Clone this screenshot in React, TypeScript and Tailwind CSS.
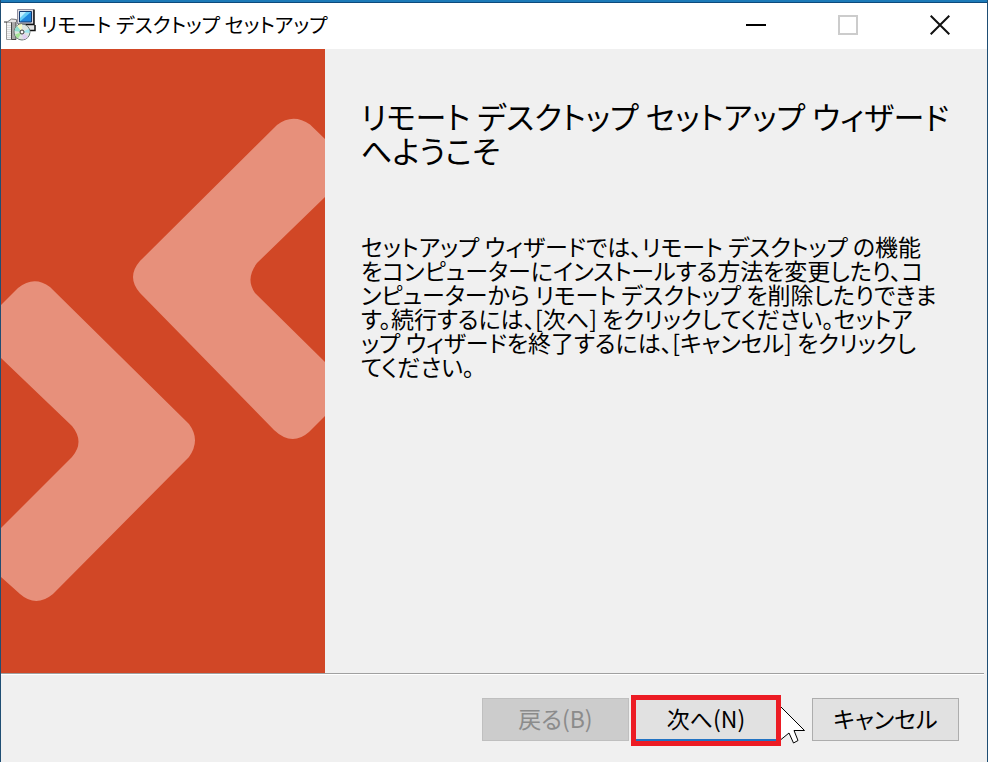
import { Fragment, type ReactNode } from 'react'

const bodyLines = [
  'セットアップ ウィザードでは、リモート デスクトップ の機能',
  'をコンピューターにインストールする方法を変更したり、コ',
  'ンピューターから リモート デスクトップ を削除したりできま',
  'す。続行するには、[次へ] をクリックしてください。セットア',
  'ップ ウィザードを終了するには、[キャンセル] をクリックし',
  'てください。',
]

function InstallerIcon() {
  return (
    <svg className="h-8 w-8 shrink-0" viewBox="0 0 32 32" aria-hidden="true">
      {/* base */}
      <path d="M13 16h18v5h-8z" fill="#e4e4e4" />
      <path d="M31 16v5.500h-5" fill="none" stroke="#111" strokeWidth="1.500" />
      {/* monitor */}
      <path d="M13.500.5h16v14.500h-16z" fill="#dcdce2" stroke="#8f8fa0" />
      <path d="M30 .5v15H14" fill="none" stroke="#111" strokeWidth="1.500" />
      <path d="M15.500 2.500h12v10.500h-12z" fill="#1f86dc" stroke="#14396e" />
      <path d="M16 3h11L16 12.500z" fill="#66cdf7" />
      <path d="M16 3h6l-6 6z" fill="#c4f0ff" />
      {/* box */}
      <path d="M2.500 13.500h5v17h-5z" fill="#f4f4f4" stroke="#999" />
      <path d="M7.500 12.500h4.500v18H7.500z" fill="#a8a8a8" stroke="#444" />
      <path d="M2.500 13.500l5-3.500 5 .5v2.500" fill="#e2e2e2" stroke="#777" />
      <path d="M0 13h3" stroke="#333" />
      <path d="M4 16v13M6 16v13" stroke="#c4c4c4" strokeDasharray="1 1" />
      {/* disc */}
      <circle cx="18" cy="23" r="8" fill="#dde5e1" stroke="#6d7a77" />
      <path d="M18 23L13 17a8 8 0 0 1 5-2z" fill="#f3f9c4" />
      <path d="M18 23L10.500 22a8 8 0 0 1 2.500-5z" fill="#8fe0cf" />
      <path d="M18 23L25 20a8 8 0 0 1 .5 4z" fill="#9be6ee" />
      <path d="M18 23L24 28a8 8 0 0 1-5 2.500z" fill="#e2cff2" />
      <path d="M18 23L14 29.500a8 8 0 0 1-3-4z" fill="#a6e698" />
      <circle cx="18" cy="23" r="2" fill="#fff" stroke="#333" />
    </svg>
  )
}

function TitleBar() {
  return (
    <header className="flex h-[46px] items-center bg-white pb-[2px] pl-[3px]">
      <InstallerIcon />
      <span className="ml-[5px] text-xl leading-8 whitespace-nowrap">リモート デスクトップ セットアップ</span>
      <div className="mr-px ml-auto flex h-full">
        <button type="button" aria-label="最小化" className="flex w-[92px] items-center justify-center">
          <svg width="20" height="20" viewBox="0 0 20 20" aria-hidden="true">
            <path d="M0 10h20" stroke="#000" strokeWidth="2" />
          </svg>
        </button>
        <button type="button" aria-label="最大化" disabled className="flex w-[92px] items-center justify-center">
          <svg width="20" height="20" viewBox="0 0 20 20" aria-hidden="true">
            <path d="M1 1h18v18H1z" fill="none" stroke="#ccc" strokeWidth="2" />
          </svg>
        </button>
        <button type="button" aria-label="閉じる" className="flex w-[92px] items-center justify-center">
          <svg width="20" height="20" viewBox="0 0 20 20" aria-hidden="true">
            <path d="M.7.7l18.600 18.600M19.300.7L.7 19.300" stroke="#111" strokeWidth="2" />
          </svg>
        </button>
      </div>
    </header>
  )
}

function Banner() {
  return (
    <div className="w-[324px] shrink-0 bg-[#d14726]">
      <svg width="324" height="624" viewBox="1 49 324 624" fill="#e7907b" aria-hidden="true">
        <path d="M325 139L310 124.500Q293 113 277 125L140 261Q126 277 140 293L274 430Q292 447 309 432L325 416V362L255 293Q245 279 257 263L325 197Z" />
        <path d="M1 305L18 288Q34 275 50 287L189 424Q201 440 189 457L53 594Q36 608 20 594L1 577V528L72 457Q85 442 72 426L1 358Z" />
      </svg>
    </div>
  )
}

function Cursor() {
  return (
    <svg className="absolute top-[7px] left-full" width="26" height="40" viewBox="0 0 26 40" aria-hidden="true">
      <path d="M0 2L23.500 25.500H13L17 35.500L12.500 38L8 28L0 34.500" fill="#fff" stroke="#000" />
    </svg>
  )
}

function WizardButton({ children, className, disabled }: { children: ReactNode; className: string; disabled?: boolean }) {
  return (
    <button type="button" disabled={disabled} className={`h-[43px] pb-[3px] text-[23px] leading-8 ${className}`}>
      {children}
    </button>
  )
}

export default function App() {
  return (
    <div className="flex min-h-screen flex-col border-x border-[#1f4e74] bg-[#f0f0f0] font-['Noto_Sans_CJK_JP',sans-serif] text-black [font-feature-settings:'palt']">
      <div className="h-[3px] border-b border-[#0d4a7c] bg-[#1c7ab8]" />
      <TitleBar />
      <main className="flex flex-1">
        <Banner />
        <section className="min-w-0 flex-1 pt-[50px] pr-8 pl-9">
          <h1 className="text-[31px] leading-[34px]">
            リモート デスクトップ セットアップ ウィザード
            <br />
            へようこそ
          </h1>
          <p className="mt-[67px] text-[23px] leading-6">
            {bodyLines.map((line) => (
              <Fragment key={line}>
                {line}
                <br />
              </Fragment>
            ))}
          </p>
        </section>
      </main>
      <footer>
        <div className="mr-[3px] h-[2px] border-t border-[#a0a0a0] bg-white" />
        <div className="flex justify-end pt-[23px] pr-7 pb-[21px]">
          <WizardButton disabled className="w-[147px] border border-[#bfbfbf] bg-[#ccc] text-[#8b8b8b]">
            戻る(B)
          </WizardButton>
          <div className="relative ml-[2px] w-[150px]">
            <WizardButton className="w-full border-2 border-[#2273c3] bg-[#e1e1e1]">次へ(N)</WizardButton>
            <span className="pointer-events-none absolute inset-x-0 -top-[3px] -bottom-[5px] border-5 border-[#ec1c24]" />
            <Cursor />
          </div>
          <WizardButton className="ml-[31px] w-[147px] border border-[#adadad] bg-[#e1e1e1]">キャンセル</WizardButton>
        </div>
      </footer>
    </div>
  )
}
